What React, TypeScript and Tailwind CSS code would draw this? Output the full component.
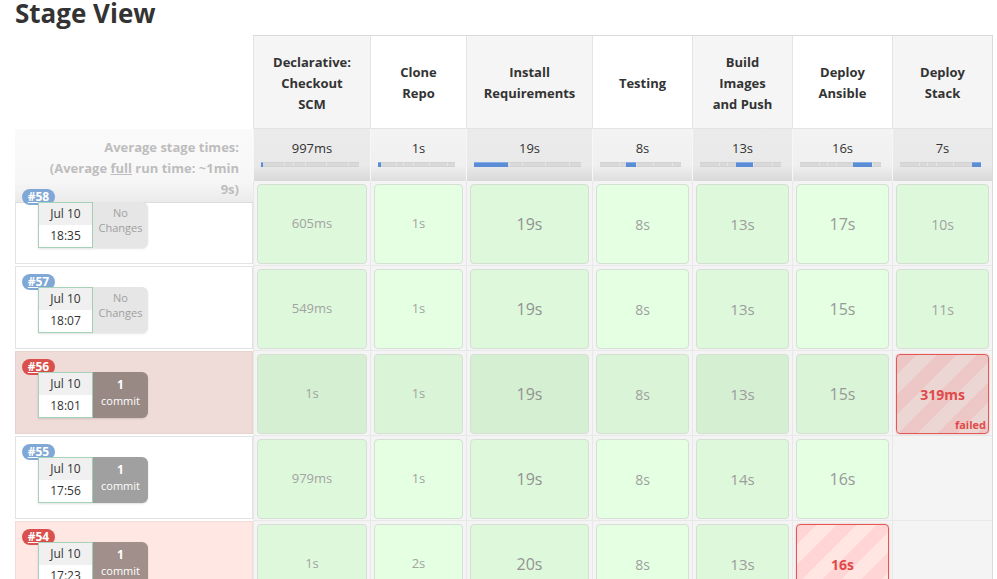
import React from "react";

type Stage = {
  lines: string[];
  w: string;
  shade: boolean;
  avg: string;
  bar: [number, number];
  txt: string;
};

const stages: Stage[] = [
  { lines: ["Declarative:", "Checkout", "SCM"], w: "w-[117px]", shade: true, avg: "997ms", bar: [0, 1.5], txt: "text-[13px] text-[#a3a3a3]" },
  { lines: ["Clone", "Repo"], w: "w-[96px]", shade: false, avg: "1s", bar: [0, 3.5], txt: "text-[13px] text-[#a3a3a3]" },
  { lines: ["Install", "Requirements"], w: "w-[126px]", shade: true, avg: "19s", bar: [0, 32], txt: "text-[16px] text-[#939393]" },
  { lines: ["Testing"], w: "w-[100px]", shade: false, avg: "8s", bar: [32, 12], txt: "text-[14px] text-[#a0a0a0]" },
  { lines: ["Build", "Images", "and Push"], w: "w-[100px]", shade: true, avg: "13s", bar: [45, 20], txt: "text-[15px] text-[#9c9c9c]" },
  { lines: ["Deploy", "Ansible"], w: "w-[100px]", shade: false, avg: "16s", bar: [65, 24], txt: "text-[16px] text-[#999]" },
  { lines: ["Deploy", "Stack"], w: "w-[100px]", shade: true, avg: "7s", bar: [89, 11], txt: "text-[14px] text-[#a3a3a3]" },
];

const ticks = [23, 33, 45, 66, 89];

type Cell = string | { fail: string } | null;

type Build = {
  id: string;
  failed: boolean;
  hover: boolean;
  time: string;
  commits: number;
  cells: Cell[];
};

const builds: Build[] = [
  { id: "#58", failed: false, hover: false, time: "18:35", commits: 0, cells: ["605ms", "1s", "19s", "8s", "13s", "17s", "10s"] },
  { id: "#57", failed: false, hover: false, time: "18:07", commits: 0, cells: ["549ms", "1s", "19s", "8s", "13s", "15s", "11s"] },
  { id: "#56", failed: true, hover: true, time: "18:01", commits: 1, cells: ["1s", "1s", "19s", "8s", "13s", "15s", { fail: "319ms" }] },
  { id: "#55", failed: false, hover: false, time: "17:56", commits: 1, cells: ["979ms", "1s", "19s", "8s", "14s", "16s", null] },
  { id: "#54", failed: true, hover: false, time: "17:23", commits: 1, cells: ["1s", "2s", "20s", "8s", "13s", { fail: "16s" }, null] },
];

const AvgBar = ({ bar }: { bar: [number, number] }) => (
  <div className="relative mt-[5px] ml-[7px] mr-[11px] h-[5px] bg-[#d9d9d9] border-y border-[#d2d2d2]">
    {ticks.map((t) => (
      <div key={t} className="absolute top-0 bottom-0 w-px bg-[#e9e9e9]" style={{ left: `${t}%` }} />
    ))}
    <div
      className="absolute top-[-1px] bottom-[-1px] min-w-[2px] bg-[#5b8dd6] border-t border-[#86aee6]"
      style={{ left: `${bar[0]}%`, width: `${bar[1]}%` }}
    />
  </div>
);

const RunHeader = ({ b }: { b: Build }) => {
  const rowBg = b.failed ? (b.hover ? "bg-[#efdcd8] border-[#e6d2ce]" : "bg-[#ffe7e3] border-[#f2dcd8]") : "bg-white border-[#e3e3e3]";
  const commitBg = b.failed ? (b.hover ? "bg-[#988985]" : "bg-[#a08f8b]") : "bg-[#a0a0a0]";
  return (
    <div className="w-[238px] shrink-0 h-[85px]">
      <div className={`h-[83px] border ${rowBg} pl-[6px] pt-[7px]`}>
        <div
          className={`relative z-20 flex h-[16px] w-[33px] items-center justify-center rounded-full text-[12px] font-bold leading-none text-white underline ${
            b.failed ? "bg-[#d9504c]" : "bg-[#80a8d6]"
          }`}
        >
          {b.id}
        </div>
        <div className="relative z-20 -mt-[3px] ml-[16px] flex">
          <div className="w-[55px] h-[46px] border border-[#a5d3b9] bg-white text-[12px] leading-[22px] text-[#333] shadow-[0_1px_2px_rgba(0,0,0,0.12)]">
            <div className="h-[22px] bg-[#f0f0f0] text-center">Jul 10</div>
            <div className="h-[22px] text-center">{b.time}</div>
          </div>
          {b.commits === 0 ? (
            <div className="w-[55px] h-[46px] rounded-r-[6px] bg-[#e6e6e6] pt-[3px] text-center text-[11px] leading-[15px] text-[#a0a0a0] shadow-[0_1px_2px_rgba(0,0,0,0.1)]">
              <div>No</div>
              <div>Changes</div>
            </div>
          ) : (
            <div className={`w-[55px] h-[46px] rounded-r-[6px] ${commitBg} pt-[5px] text-center text-[11px] leading-[16px] text-white shadow-[0_1px_2px_rgba(0,0,0,0.12)]`}>
              <div className="font-bold text-[12px]">{b.commits}</div>
              <div>commit</div>
            </div>
          )}
        </div>
      </div>
    </div>
  );
};

const StageCell = ({ s, c, hover }: { s: Stage; c: Cell; hover: boolean }) => {
  const green = hover
    ? s.shade
      ? "bg-[#d5efd2]"
      : "bg-[#daf4d7]"
    : s.shade
    ? "bg-[#def8db]"
    : "bg-[#e4ffe2]";
  return (
    <div className={`${s.w} h-[85px] shrink-0 border-l border-b border-[#e8e8e8] bg-[#f4f4f4] px-[3px] pt-[3px] pb-[1px]`}>
      {c === null ? null : typeof c === "string" ? (
        <div className={`h-full rounded-[4px] border border-[#d6dfd4] ${green} flex items-center justify-center ${s.txt}`}>
          {c}
        </div>
      ) : (
        <div
          className={`relative h-full rounded-[4px] border border-[#e35757] flex items-center justify-center text-[14px] font-bold text-[#e04a4a] shadow-[0_0_2px_rgba(224,74,74,0.4)] ${
            hover
              ? "bg-[repeating-linear-gradient(135deg,#edc6c6_0,#edc6c6_14px,#ecd6d3_14px,#ecd6d3_28px)]"
              : "bg-[repeating-linear-gradient(135deg,#ffd5d5_0,#ffd5d5_14px,#ffe6e2_14px,#ffe6e2_28px)]"
          }`}
        >
          {c.fail}
          {hover && <span className="absolute right-[2px] bottom-[1px] text-[11px] leading-[14px] font-bold">failed</span>}
        </div>
      )}
    </div>
  );
};

export default function App() {
  return (
    <div className="w-[997px] h-[579px] overflow-hidden bg-white font-['Open_Sans',sans-serif] text-[#333]">
      <h1 className="h-[35px] pl-[15px] pt-[1px] text-[26px] font-bold leading-[30px] -mt-[3px] text-[#333]">Stage View</h1>
      <div className="pl-[15px] mt-[3px]">
        {/* stage names */}
        <div className="flex">
          <div className="w-[238px] shrink-0" />
          <div className="flex border-t border-r border-[#dadada]">
            {stages.map((s, i) => (
              <div
                key={i}
                className={`${s.w} h-[93px] shrink-0 border-l border-b border-[#e4e4e4] ${
                  s.shade ? "bg-[#f5f5f5]" : "bg-white"
                } flex flex-col items-center justify-center pt-[2px] text-center text-[13px] font-bold leading-[21px] text-[#333]`}
              >
                {s.lines.map((l) => (
                  <div key={l}>{l}</div>
                ))}
              </div>
            ))}
          </div>
        </div>

        {/* average times */}
        <div className="flex">
          <div className="relative w-[238px] shrink-0 h-[52px]">
            <div className="absolute left-0 right-0 top-0 z-10 h-[74px] border-b border-[#dcdcdc] bg-linear-to-b from-[#fafafa] via-[#f7f7f7] via-70% to-[#ebebeb] pr-[14px] pt-[8px] text-right text-[13px] font-bold leading-[21px] text-[#bdbdbd]">
              <div>Average stage times:</div>
              <div>
                (Average <span className="underline">full</span> run time: ~1min
              </div>
              <div>9s)</div>
            </div>
          </div>
          <div className="flex border-r border-[#dadada]">
            {stages.map((s, i) => (
              <div
                key={i}
                className={`${s.w} h-[52px] shrink-0 border-l border-[#f7f7f7] pt-[10px] bg-linear-to-b ${
                  s.shade ? "from-[#ebebeb] via-[#e9e9e9] to-[#d9d9d9]" : "from-[#f3f3f3] via-[#f0f0f0] to-[#dedede]"
                } via-70%`}
              >
                <div className="text-center text-[13px] leading-[18px] text-[#333]">{s.avg}</div>
                <AvgBar bar={s.bar} />
              </div>
            ))}
          </div>
        </div>

        {/* runs */}
        {builds.map((b) => (
          <div key={b.id} className="flex">
            <RunHeader b={b} />
            <div className="flex border-r border-[#dadada]">
              {stages.map((s, i) => (
                <StageCell key={i} s={s} c={b.cells[i]} hover={b.hover} />
              ))}
            </div>
          </div>
        ))}
      </div>
    </div>
  );
}
